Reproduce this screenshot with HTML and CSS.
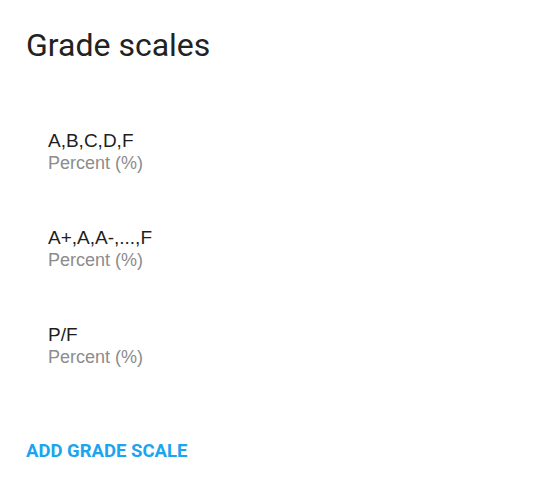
FILE: index.html
```html
<!DOCTYPE html>
<html lang="en">
<head>
    <meta charset="UTF-8">
    <meta name="viewport" content="width=device-width, initial-scale=1.0">
    <title>Grade scales</title>
    <link rel="stylesheet" href="styles.css">
</head>
<body>
    <div class="panel">
        <h1 class="title">Grade scales</h1>
        <ul class="scales">
            <li class="scale">
                <div class="scale-name">A,B,C,D,F</div>
                <div class="scale-type">Percent (%)</div>
            </li>
            <li class="scale">
                <div class="scale-name">A+,A,A-,...,F</div>
                <div class="scale-type">Percent (%)</div>
            </li>
            <li class="scale">
                <div class="scale-name">P/F</div>
                <div class="scale-type">Percent (%)</div>
            </li>
        </ul>
        <button class="add-btn" type="button">ADD GRADE SCALE</button>
    </div>
</body>
</html>
```

FILE: styles.css
```css
body {margin: 0; background: #fff; font-family: Roboto, "Liberation Sans", sans-serif;}
.panel {padding: 25px 26px 0 26px;}
.title {margin: 0; font-size: 32px; font-weight: 400; line-height: 40px; color: #222;}
.scales {list-style: none; margin: 0; padding: 64px 0 0 22px;}
.scale {height: 97px;}
.scale-name {font-family: "Liberation Sans", Arial, sans-serif; font-size: 19px; line-height: 23px; color: #1e1e1e;}
.scale-type {font-family: "Liberation Sans", Arial, sans-serif; font-size: 18px; line-height: 22px; color: #8c8c8c;}
.add-btn {display: block; margin: 20px 0 0 0; padding: 0; border: 0; background: none; font-family: Roboto, sans-serif; font-weight: 700; font-size: 18.5px; color: #1ba4ef;}
```
